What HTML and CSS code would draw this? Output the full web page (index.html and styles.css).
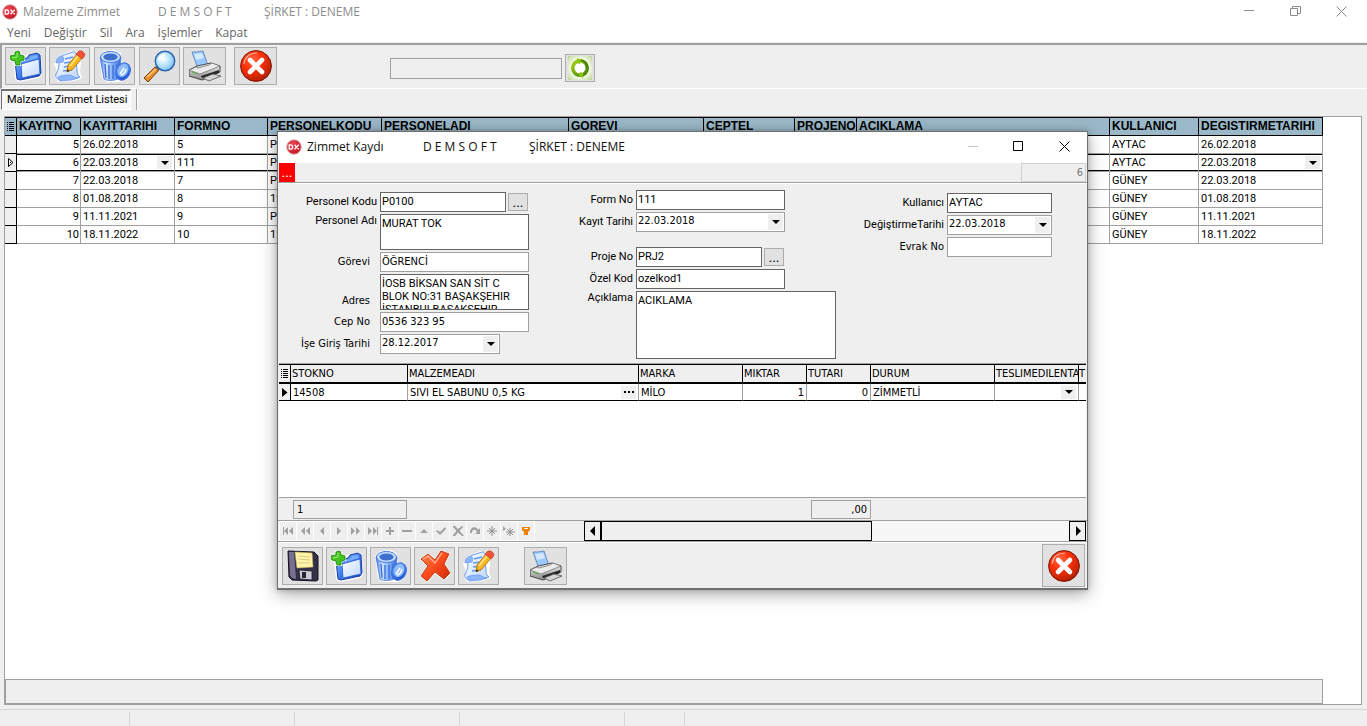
FILE: index.html
```html
<!DOCTYPE html>
<html lang="tr">
<head>
<meta charset="utf-8">
<title>Malzeme Zimmet</title>
<link rel="stylesheet" href="styles.css">
</head>
<body>
<svg class="sprite" aria-hidden="true">
  <defs>
    <linearGradient id="blue" x1="0" y1="0" x2="1" y2="1"><stop offset="0" stop-color="#8fc2ff"/><stop offset=".5" stop-color="#3d7df0"/><stop offset="1" stop-color="#1743b8"/></linearGradient>
    <linearGradient id="paper" x1="0" y1="0" x2="1" y2="1"><stop offset="0" stop-color="#ffffff"/><stop offset="1" stop-color="#bcd8ff"/></linearGradient>
    <linearGradient id="can" x1="0" y1="0" x2="1" y2="0"><stop offset="0" stop-color="#4a83ea"/><stop offset=".3" stop-color="#cfe4ff"/><stop offset=".6" stop-color="#7fb0f8"/><stop offset="1" stop-color="#3a6ad8"/></linearGradient>
    <radialGradient id="red" cx=".38" cy=".3" r=".8"><stop offset="0" stop-color="#ff6a48"/><stop offset=".4" stop-color="#fb3208"/><stop offset="1" stop-color="#a61c04"/></radialGradient>
    <linearGradient id="cross" x1="0" y1="0" x2="1" y2="1"><stop offset="0" stop-color="#ff8a5c"/><stop offset=".5" stop-color="#fb4a1c"/><stop offset="1" stop-color="#c52a04"/></linearGradient>
    <radialGradient id="lens" cx=".4" cy=".4" r=".7"><stop offset="0" stop-color="#ffffff"/><stop offset=".6" stop-color="#a8dcfb"/><stop offset="1" stop-color="#62aef0"/></radialGradient>
    <linearGradient id="metal" x1="0" y1="0" x2="0" y2="1"><stop offset="0" stop-color="#f4f4f4"/><stop offset="1" stop-color="#8c8c8c"/></linearGradient>
    <linearGradient id="green" x1="0" y1="0" x2="1" y2="1"><stop offset="0" stop-color="#a6d514"/><stop offset="1" stop-color="#3e7d06"/></linearGradient>
    <radialGradient id="leaf" cx=".5" cy=".5" r=".75"><stop offset=".45" stop-color="#fdfffb"/><stop offset="1" stop-color="#b4cf86"/></radialGradient>
    <radialGradient id="dxfill" cx=".4" cy=".3" r=".8"><stop offset="0" stop-color="#ea4652"/><stop offset="1" stop-color="#c5101f"/></radialGradient>
  </defs>
  <symbol id="i-dx" viewBox="0 0 16 16">
    <circle cx="8" cy="8" r="7.300" fill="url(#dxfill)" stroke="#dcb4b6" stroke-width="1"/>
    <path d="M3.200 5.800v4.400h1.200c3 0 3-4.400 0-4.400zM8.500 5.800l4.300 4.400M12.800 5.800l-4.300 4.400" fill="none" stroke="#fff" stroke-width="1.300"/>
  </symbol>
  <symbol id="i-new" viewBox="0 0 32 32">
    <path d="M3 10L16 5 28 2l3 3 1 19-3 4-20 4-4-3z" fill="#fff"/>
    <path d="M5 11l12-3 2-3 8-2 3 2 1 18-2 3-19 4-3-1z" fill="url(#blue)" stroke="#1a3ea0" stroke-width="1"/>
    <path d="M11 14l18-5 1 15-18 4z" fill="url(#paper)" stroke="#2457d0" stroke-width=".8"/>
    <path d="M14 10l5-1 2-3 6-1 1 3-14 4z" fill="#78aef8"/>
    <path d="M5 2l4-1 1 4 4 1v4l-4 1v4H6l-1-4-4-1-1-4 5-1z" fill="#46c422" stroke="#fff" stroke-width="2"/>
    <path d="M5 2l4-1 1 4 4 1v4l-4 1v4H6l-1-4-4-1-1-4 5-1z" fill="#46c422" stroke="#1c8a0c" stroke-width=".9"/>
    <path d="M7 3v4L2 8" fill="none" stroke="#a3ef78" stroke-width="1"/>
  </symbol>
  <symbol id="i-edit" viewBox="0 0 32 32">
    <path d="M0 14L5 6 17 1l8 2 2 10-1 9 2 6-8 3-15 1-4-4 2-7z" fill="#fff"/>
    <path d="M5 12c1-5 2-6 5-7l9-3c4 0 3 3 3 6l1 12c0 4 1 6 3 7l-7 2-12 1c-4 0-6-3-5-6 2-3 3-6 3-12z" fill="url(#paper)" stroke="#6b9bf2" stroke-width="1"/>
    <path d="M2 13c0-4 3-7 6-7 2 1 2 3 1 6zM4 27c4-2 8-2 13-2 2 1 4 3 7 3l-6 2-12 1z" fill="#8db6fa" stroke="#5a8ceb" stroke-width=".6"/>
    <path d="M11 9l8-2M10 13l8-1M10 17l6-1M9 21l9-1" stroke="#6297ef" stroke-width="1.500"/>
    <path d="M23 4l5 4-9 11-6 3 1-7z" fill="#f8b820" stroke="#b96c08" stroke-width=".9"/>
    <path d="M24 6L16 16" stroke="#ffe680" stroke-width="1.700"/>
    <path d="M22 4l3-3h3l3 3-1 3-2 2z" fill="#f0523a" stroke="#c43a24" stroke-width=".7"/>
    <path d="M13 22l.6-3 2 2z" fill="#402507"/>
  </symbol>
  <symbol id="i-trash" viewBox="0 0 32 32">
    <path d="M0 6L5 1 15 0l7 3 1 9 6 1 3 8-3 8-7 3H8l-5-4z" fill="#fff"/>
    <path d="M1 7h21l-2 21c-3 3-12 3-15 1z" fill="url(#can)" stroke="#4a7ae0" stroke-width=".9"/>
    <path d="M6 14l1 14M10 15v14M14 15v14M18 14v14" stroke="#4171d8" stroke-width="1.400"/>
    <ellipse cx="11.500" cy="7" rx="10" ry="5.500" fill="#c8e1ff" stroke="#4576dd"/>
    <ellipse cx="11.500" cy="7" rx="7.200" ry="3.500" fill="#3f6fce"/>
    <ellipse cx="24" cy="21.500" rx="7" ry="9" fill="url(#blue)" stroke="#3c6cd8" transform="rotate(25 24 21.500)"/>
    <ellipse cx="24" cy="20.500" rx="5" ry="6.800" fill="#8fbdfb" transform="rotate(25 24 20.500)"/>
    <path d="M21 24l4-6M22 25q4-1 5-6" fill="none" stroke="#fff" stroke-width="1.400"/>
  </symbol>
  <symbol id="i-find" viewBox="0 0 32 32">
    <path d="M0 28L11 17l4 3L4 32z" fill="#e98b26" stroke="#74400b" stroke-width="1"/>
    <path d="M3 27l9-8" stroke="#ffc780" stroke-width="1.600"/>
    <path d="M11 17l3-2 3 3-2 2z" fill="#585858"/>
    <circle cx="21" cy="11" r="9.700" fill="url(#lens)" stroke="#2e67ac" stroke-width="1.500"/>
    <path d="M15 10q1-5 6-5" fill="none" stroke="#fff" stroke-width="2"/>
  </symbol>
  <symbol id="i-print" viewBox="0 0 32 32">
    <path d="M3 2l5 0 6-1 5 15-10 3z" fill="#9acaff" stroke="#5c84ba" stroke-width=".9"/>
    <path d="M5 4l8-1 2 5-8 2z" fill="#d4e9ff"/>
    <path d="M0 20l8-4 14-3 9 3v6L13 30 0 26z" fill="url(#metal)" stroke="#484848" stroke-width="1"/>
    <path d="M0 20l11 4 20-8-8-3-3 2-11 3-2-1z" fill="#ececec" stroke="#686868" stroke-width=".7"/>
    <path d="M12 26l18-6v3l-17 5z" fill="#282828"/>
    <path d="M14 28l10-4 8 2-12 5z" fill="#d4d4d4" stroke="#525252" stroke-width=".8"/>
    <path d="M3 22l6 2" stroke="#4fb33c" stroke-width="1"/>
  </symbol>
  <symbol id="i-close" viewBox="0 0 32 32">
    <circle cx="16" cy="16" r="15.400" fill="url(#red)" stroke="#7c1404" stroke-width="1"/>
    <path d="M4 14C5 6 11 3 17 3" fill="none" stroke="#ffb7a2" stroke-width="1.200"/>
    <path d="M10 10l12 12M22 10L10 22" stroke="#fff" stroke-width="4.600" stroke-linecap="round"/>
  </symbol>
  <symbol id="i-cross" viewBox="0 0 32 32">
    <path d="M2 9l7-5 7 6 6-9 8 3-5 10 6 9-6 6-9-7-8 9-6-5 7-10z" fill="#fff" stroke="#fff" stroke-width="2"/>
    <path d="M2 9l7-5 7 6 6-9 8 3-5 10 6 9-6 6-9-7-8 9-6-5 7-10z" fill="url(#cross)" stroke="#c23a14" stroke-width="1"/>
    <path d="M4 9l5-3 7 7 7-10" fill="none" stroke="#ffb594" stroke-width="1.300"/>
  </symbol>
  <symbol id="i-save" viewBox="0 0 32 32">
    <path d="M1 1l26 1 4 4v24l-2 1-24-1-3-3z" fill="#343048" stroke="#14121f" stroke-width="1"/>
    <path d="M2 2h5l2 27-4-1-2-3z" fill="#77708f"/>
    <path d="M8 2l17 1 1 14-16 1z" fill="#fff4a8" stroke="#c8b764" stroke-width=".6"/>
    <path d="M11 6l12 1M11 9l12 1M11 13h12" stroke="#dccb86" stroke-width="1"/>
    <path d="M12 20l13 1v9l-12-1z" fill="#c9cad4" stroke="#1e1c2a" stroke-width=".8"/>
    <path d="M15 22h4v6h-4z" fill="#272436"/>
  </symbol>
  <symbol id="i-refresh" viewBox="0 0 24 24">
    <rect width="24" height="24" fill="url(#leaf)"/>
    <circle cx="12" cy="12" r="7.300" fill="none" stroke="url(#green)" stroke-width="3.600"/>
    <path d="M9 2l4 2-1 4-3-1zM15 22l-4-2 1-4 3 1z" fill="#8cc40c"/>
    <path d="M13 4c4 1 6 4 6 8" fill="none" stroke="#3e7d06" stroke-width="1.500"/>
  </symbol>
  <symbol id="i-list" viewBox="0 0 7 9">
    <path d="M0 .5h1M2 .5h5M0 2.500h1M2 2.500h5M0 4.500h1M2 4.500h5M0 6.500h1M2 6.500h5M0 8.500h1M2 8.500h5" stroke="#000"/>
  </symbol>
</svg>

<main class="app">
  <header class="titlebar">
    <svg class="logo"><use href="#i-dx"/></svg>
    <h1 class="caption"><span>Malzeme Zimmet</span><span>D E M S O F T</span><span>ŞİRKET : DENEME</span></h1>
    <div class="winctl">
      <button aria-label="Simge durumu"><svg viewBox="0 0 11 11"><path d="M0 4.500h10"/></svg></button>
      <button aria-label="Önceki boyut"><svg viewBox="0 0 11 11"><path d="M.5 2.500h7v7h-7zM2.500 2.500v-2h8v7h-3"/></svg></button>
      <button aria-label="Kapat"><svg viewBox="0 0 11 11"><path d="M.5.5l10 10M10.500.5l-10 10"/></svg></button>
    </div>
  </header>
  <nav class="menu">
    <button>Yeni</button><button>Değiştir</button><button>Sil</button><button>Ara</button><button>İşlemler</button><button>Kapat</button>
  </nav>
  <div class="toolbar">
    <div class="tools">
      <button class="tool" aria-label="Yeni"><svg><use href="#i-new"/></svg></button>
      <button class="tool" aria-label="Değiştir"><svg><use href="#i-edit"/></svg></button>
      <button class="tool" aria-label="Sil"><svg><use href="#i-trash"/></svg></button>
      <button class="tool" aria-label="Ara"><svg><use href="#i-find"/></svg></button>
      <button class="tool tool-wide" aria-label="Yazdır"><svg><use href="#i-print"/></svg></button>
      <button class="tool tool-wide" aria-label="Kapat"><svg><use href="#i-close"/></svg></button>
    </div>
    <input class="quick" aria-label="Hızlı arama">
    <button class="tool tool-refresh" aria-label="Yenile"><svg><use href="#i-refresh"/></svg></button>
  </div>
  <div class="tabs"><button class="tab">Malzeme Zimmet Listesi</button></div>

  <section class="list">
    <table class="grid records">
      <colgroup><col class="w-ind"><col class="w-no"><col class="w-date"><col class="w-form"><col class="w-code"><col class="w-name"><col class="w-job"><col class="w-tel"><col class="w-proj"><col><col class="w-user"><col class="w-mod"></colgroup>
      <thead><tr><th><svg class="listicon"><use href="#i-list"/></svg></th><th>KAYITNO</th><th>KAYITTARIHI</th><th>FORMNO</th><th>PERSONELKODU</th><th>PERSONELADI</th><th>GOREVI</th><th>CEPTEL</th><th>PROJENO</th><th>ACIKLAMA</th><th>KULLANICI</th><th>DEGISTIRMETARIHI</th></tr></thead>
      <tbody>
        <tr><td></td><td class="num">5</td><td>26.02.2018</td><td>5</td><td>P</td><td></td><td></td><td></td><td></td><td></td><td>AYTAC</td><td>26.02.2018</td></tr>
        <tr class="current"><td><svg class="pointer" viewBox="0 0 6 9"><path d="M.5.5v8l4.500-4z" fill="none" stroke="#000"/><path d="M2 4.500h1" stroke="#000"/></svg></td><td class="num">6</td><td><div class="pick">22.03.2018<button class="drop" aria-label="Tarih seç"></button></div></td><td>111</td><td>P</td><td></td><td></td><td></td><td></td><td></td><td>AYTAC</td><td><div class="pick">22.03.2018<button class="drop" aria-label="Tarih seç"></button></div></td></tr>
        <tr><td></td><td class="num">7</td><td>22.03.2018</td><td>7</td><td>P</td><td></td><td></td><td></td><td></td><td></td><td>GÜNEY</td><td>22.03.2018</td></tr>
        <tr><td></td><td class="num">8</td><td>01.08.2018</td><td>8</td><td>12</td><td></td><td></td><td></td><td></td><td></td><td>GÜNEY</td><td>01.08.2018</td></tr>
        <tr><td></td><td class="num">9</td><td>11.11.2021</td><td>9</td><td>P</td><td></td><td></td><td></td><td></td><td></td><td>GÜNEY</td><td>11.11.2021</td></tr>
        <tr><td></td><td class="num">10</td><td>18.11.2022</td><td>10</td><td>12</td><td></td><td></td><td></td><td></td><td></td><td>GÜNEY</td><td>18.11.2022</td></tr>
      </tbody>
    </table>
    <div class="listfoot"></div>
  </section>
  <footer class="status"><span class="s-a"></span><span class="s-b"></span><span class="s-b"></span><span class="s-b"></span><span class="s-c"></span></footer>
</main>

<section class="dialog" role="dialog" aria-labelledby="dlg">
  <header class="titlebar dlgbar">
    <svg class="logo"><use href="#i-dx"/></svg>
    <h2 class="caption" id="dlg"><span>Zimmet Kaydı</span><span>D E M S O F T</span><span>ŞİRKET : DENEME</span></h2>
    <div class="winctl">
      <button disabled aria-label="Simge durumu"><svg viewBox="0 0 11 11"><path d="M1 5.500h10"/></svg></button>
      <button aria-label="Ekranı kapla"><svg viewBox="0 0 11 11"><path d="M.5.5h9v9h-9z"/></svg></button>
      <button aria-label="Kapat"><svg viewBox="0 0 11 11"><path d="M.5.5l10 10M10.500.5l-10 10"/></svg></button>
    </div>
  </header>
  <div class="strip"><button class="alert">...</button><input class="recno" value="6" disabled aria-label="Kayıt no"></div>

  <form class="form">
    <div class="col col-a">
      <div class="row"><label for="kod">Personel Kodu</label><input id="kod" class="f dark f-lookup" value="P0100"><button type="button" class="dots">...</button></div>
      <div class="row top"><label for="adi">Personel Adı</label><textarea id="adi" class="f dark f-full">MURAT TOK</textarea></div>
      <div class="row tah"><label for="gor">Görevi</label><input id="gor" class="f f-full" value="ÖĞRENCİ"></div>
      <div class="row tah end"><label for="adr">Adres</label><textarea id="adr" class="f dark f-full">İOSB BİKSAN SAN SİT C BLOK NO:31 BAŞAKŞEHIR İSTANBULBAŞAKŞEHIR</textarea></div>
      <div class="row tah"><label for="cep">Cep No</label><input id="cep" class="f f-full" value="0536 323 95"></div>
      <div class="row tah"><label for="ise">İşe Giriş Tarihi</label><span class="combo f-date"><select id="ise" class="f"><option>28.12.2017</option></select></span></div>
    </div>
    <div class="col col-b">
      <div class="row"><label for="form">Form No</label><input id="form" class="f dark f-full" value="111"></div>
      <div class="row"><label for="kay">Kayıt Tarihi</label><span class="combo f-full"><select id="kay" class="f"><option>22.03.2018</option></select></span></div>
      <div class="row spaced"><label for="prj">Proje No</label><input id="prj" class="f dark f-lookup" value="PRJ2"><button type="button" class="dots">...</button></div>
      <div class="row"><label for="ozel">Özel Kod</label><input id="ozel" class="f dark f-full" value="ozelkod1"></div>
      <div class="row top"><label for="acik">Açıklama</label><textarea id="acik" class="f dark f-note">ACIKLAMA</textarea></div>
    </div>
    <div class="col col-c">
      <div class="row"><label for="kul">Kullanıcı</label><input id="kul" class="f dark f-short" value="AYTAC"></div>
      <div class="row"><label for="deg">DeğiştirmeTarihi</label><span class="combo f-short"><select id="deg" class="f"><option>22.03.2018</option></select></span></div>
      <div class="row"><label for="evr" class="tahlabel">Evrak No</label><input id="evr" class="f f-short"></div>
    </div>
  </form>

  <div class="items">
    <table class="grid lines">
      <colgroup><col class="w-ind"><col class="w-stok"><col><col class="w-brand"><col class="w-qty"><col class="w-qty"><col class="w-state"><col class="w-deliv"><col class="w-last"></colgroup>
      <thead><tr><th><svg class="listicon"><use href="#i-list"/></svg></th><th>STOKNO</th><th>MALZEMEADI</th><th>MARKA</th><th>MIKTAR</th><th>TUTARI</th><th>DURUM</th><th>TESLIMEDILENTA</th><th>T</th></tr></thead>
      <tbody><tr class="current"><td><svg class="pointer" viewBox="0 0 6 9"><path d="M0 0v9l5.500-4.500z"/></svg></td><td>14508</td><td><div class="pick">SIVI EL SABUNU 0,5 KG<button class="more" aria-label="Malzeme seç"><svg viewBox="0 0 10 2"><path d="M0 0h2v2H0zM4 0h2v2H4zM8 0h2v2H8z"/></svg></button></div></td><td>MİLO</td><td class="num">1</td><td class="num">0</td><td>ZİMMETLİ</td><td><div class="pick"><button class="drop" aria-label="Tarih seç"></button></div></td><td></td></tr></tbody>
    </table>
  </div>
  <div class="totals"><output class="count">1</output><output class="sum">,00</output></div>
  <div class="navrow">
    <div class="nav">
      <button aria-label="İlk"><svg viewBox="0 0 12 10"><path d="M1 1h1v8H1zM6 1v8L2 5zM11 1v8L7 5z"/></svg></button>
      <button aria-label="Önceki sayfa"><svg viewBox="0 0 12 10"><path d="M6 1v8L2 5zM11 1v8L7 5z"/></svg></button>
      <button aria-label="Önceki"><svg viewBox="0 0 12 10"><path d="M8 1v8L4 5z"/></svg></button>
      <button aria-label="Sonraki"><svg viewBox="0 0 12 10"><path d="M4 1v8l4-4z"/></svg></button>
      <button aria-label="Sonraki sayfa"><svg viewBox="0 0 12 10"><path d="M1 1v8l4-4zM6 1v8l4-4z"/></svg></button>
      <button aria-label="Son"><svg viewBox="0 0 12 10"><path d="M1 1v8l4-4zM6 1v8l4-4zM10 1h1v8h-1z"/></svg></button>
      <button aria-label="Ekle"><svg viewBox="0 0 12 10"><path d="M5 1h2v3h3v2H7v3H5V6H2V4h3z"/></svg></button>
      <button aria-label="Çıkar"><svg viewBox="0 0 12 10"><path d="M1 4h10v2H1z"/></svg></button>
      <button aria-label="Düzenle"><svg viewBox="0 0 12 10"><path d="M2 7l4-4 4 4z"/></svg></button>
      <button aria-label="Onayla"><svg viewBox="0 0 12 10"><path d="M2 4l3 2 5-5 1 2-6 6-4-4z"/></svg></button>
      <button aria-label="Vazgeç"><svg viewBox="0 0 12 10"><path d="M1 0h2l3 3 4-3h1v1L7.500 5l4 4v1H10L6 6.500 3 10H1V9l3.500-4L1 1z"/></svg></button>
      <button aria-label="Yenile"><svg viewBox="0 0 12 10"><path d="M1 7c0-7 7-7 8-3l2-2v6H6l2-2C7 3 3 3 3 7z"/></svg></button>
      <button aria-label="Yer imi"><svg viewBox="0 0 12 10"><path class="line" d="M6 0v10M1 5h10M3 2l6 6M9 2L3 8"/></svg></button>
      <button aria-label="Yer imine git"><svg viewBox="0 0 12 10"><path d="M0 0v5l3-2z"/><path class="line" d="M7 2v8M3 6h9M4 3l6 6M10 3L4 9"/></svg></button>
      <button aria-label="Süz" class="filter"><svg viewBox="0 0 12 10"><path d="M2 1h8v3L8 6v3H4V6L2 4zM4 3h4V2H4z" fill-rule="evenodd"/></svg></button>
    </div>
    <div class="scroll">
      <button class="arrow" aria-label="Sola"><svg viewBox="0 0 6 10"><path d="M5 0v10L0 5z"/></svg></button>
      <div class="track"><div class="thumb"></div></div>
      <button class="arrow" aria-label="Sağa"><svg viewBox="0 0 6 10"><path d="M1 0v10l5-5z"/></svg></button>
    </div>
  </div>
  <div class="actions">
    <button class="tool" aria-label="Kaydet"><svg><use href="#i-save"/></svg></button>
    <button class="tool" aria-label="Yeni"><svg><use href="#i-new"/></svg></button>
    <button class="tool" aria-label="Sil"><svg><use href="#i-trash"/></svg></button>
    <button class="tool" aria-label="İptal"><svg><use href="#i-cross"/></svg></button>
    <button class="tool" aria-label="Düzenle"><svg><use href="#i-edit"/></svg></button>
    <button class="tool tool-wide tool-print" aria-label="Yazdır"><svg><use href="#i-print"/></svg></button>
    <button class="tool tool-wide tool-exit" aria-label="Kapat"><svg><use href="#i-close"/></svg></button>
  </div>
</section>
</body>
</html>
```
FILE: styles.css
```css
:root {
  --face: #efefef;
  --line: #a0a0a0;
  --ms: Roboto, "Liberation Sans", sans-serif;
  --bold: "Liberation Sans", Arial, sans-serif;
  --tahoma: "DejaVu Sans Condensed", "Noto Sans", sans-serif;
  --segoe: "Open Sans", "Noto Sans", sans-serif;
}
* { box-sizing: border-box; }
body { margin: 0; background: var(--face); font: 11px/14px var(--ms); color: #000; overflow: hidden; }
button, input, select, textarea { font: inherit; color: inherit; margin: 0; border-radius: 0; }
button { padding: 0; }
.sprite { position: absolute; width: 0; height: 0; }

.app { display: flex; flex-direction: column; height: 100vh; }

/* Title bars */
.titlebar { display: flex; align-items: center; height: 23px; padding-left: 2px; background: #fff; color: #8c8c8c; font: 12px/16px var(--segoe); }
.logo { width: 16px; height: 16px; flex: none; }
.caption { display: grid; grid-template-columns: 135px 106px auto; margin: 0 0 0 5px; font: inherit; white-space: nowrap; }
.winctl { display: flex; margin-left: auto; margin-right: 3px; }
.winctl button { width: 46px; height: 20px; border: 0; background: none; display: grid; place-items: center; }
.winctl svg { width: 11px; height: 11px; fill: none; stroke: #8c8c8c; }

.menu { display: flex; gap: 13px; height: 19px; padding-left: 7px; background: #fff; }
.menu button { border: 0; background: none; color: #666; font: 12px/18px var(--segoe); }

/* Toolbar */
.toolbar { display: flex; align-items: center; height: 46px; border-top: 2px solid var(--line); border-left: 2px solid var(--line); border-bottom: 1px solid #fff; padding: 0 0 1px 3px; margin-top: 1px; }
.tools { display: grid; grid-template-columns: 44px 45px 45px 44px 51px 156px; }
.tool { width: 41px; height: 38px; border: 1px solid #adadad; background: #e1e1e1; display: grid; place-items: center; }
.tool svg { width: 32px; height: 32px; }
.tool-wide { width: 43px; }
.quick { width: 172px; height: 21px; border: 1px solid var(--line); background: var(--face); margin-top: 4px; }
.tool-refresh { width: 30px; height: 28px; margin: 4px 0 0 3px; }
.tool-refresh svg { width: 24px; height: 24px; }

.tabs { display: flex; height: 27px; padding-left: 1px; }
.tab { height: 21px; padding: 0 3px 0 5px; border: 1px solid #fff; border-top: 2px solid #707070; border-left: 1px solid #707070; background: #f7f7f7; line-height: 18px; }
.tabs::after { content: ""; height: 21px; margin-left: 5px; border-left: 1px solid var(--line); border-right: 1px solid #fff; }

/* Record list */
.list { flex: 1; display: flex; flex-direction: column; justify-content: space-between; margin: 0 5px 4px 4px; border: 1px solid var(--line); background: #fff; }
.grid { border-collapse: separate; border-spacing: 0; table-layout: fixed; }
.grid th, .grid td { height: 18px; padding: 0 2px; overflow: hidden; white-space: nowrap; text-align: left; line-height: 15px; }
.grid th { border-right: 1px solid #000; border-bottom: 1px solid #000; }
.grid td { border-right: 1px solid var(--line); border-bottom: 1px solid var(--line); }
.grid th:first-child, .grid td:first-child { padding: 0; border-color: #000; background: var(--face); text-align: center; }
.grid .num { text-align: right; padding-right: 1px; }
.grid .current td:not(:first-child) { box-shadow: inset 0 1px #000, inset 0 -1px #000; }
.records { width: calc(100% - 38px); border-top: 1px solid #000; }
.records th, .records th:first-child { background: #9bb8c8; font: bold 12px/15px var(--bold); }
.listicon { width: 7px; height: 9px; display: block; margin: auto; }
.pointer { width: 6px; height: 9px; display: block; margin: auto; }
.pick { display: flex; justify-content: space-between; align-items: center; height: 15px; }
.drop, .more { width: 15px; height: 13px; margin-left: auto; border: 0; background: var(--face); display: grid; place-items: center; }
.drop::after, .combo::after { content: ""; border: 4px solid transparent; border-top-color: #000; border-bottom: 0; }
.more svg { width: 10px; height: 2px; }
.w-ind { width: 12px; } .w-no { width: 64px; } .w-date { width: 94px; } .w-form { width: 93px; }
.w-code { width: 114px; } .w-name { width: 187px; } .w-job { width: 135px; } .w-tel { width: 91px; }
.w-proj { width: 62px; } .w-user { width: 89px; } .w-mod { width: 124px; }
.listfoot { height: 25px; width: calc(100% - 38px); border: 1px solid var(--line); background: var(--face); }

.status { display: flex; height: 17px; border-top: 1px solid #d7d7d7; padding-top: 2px; }
.status span { border-right: 1px solid #d7d7d7; }
.s-a { width: 130px; } .s-b { width: 165px; } .s-c { width: 60px; }

/* Floating record window */
.dialog { position: absolute; left: 277px; top: 131px; width: 811px; display: flex; flex-direction: column; background: var(--face); border: 1px solid #6f6f6f; border-bottom-width: 2px; box-shadow: 0 4px 16px rgba(0, 0, 0, .35), 0 0 5px rgba(0, 0, 0, .2); }
.dlgbar { height: 31px; padding: 0 0 2px 8px; color: #111; }
.dlgbar .caption { grid-template-columns: 116px 106px auto; }
.dlgbar .winctl { margin-right: 0; }
.dlgbar .winctl svg { stroke: #000; }
.dlgbar .winctl button:disabled svg { stroke: #c4c4c4; }
.strip { display: flex; justify-content: space-between; height: 20px; padding: 0 1px; border-bottom: 1px solid var(--line); }
.alert { width: 16px; height: 19px; border: 0; background: #f00; color: #fff; font-size: 14px; line-height: 19px; }
.recno { width: 65px; height: 19px; border: 1px solid #d0d0d0; background: var(--face); color: #777; font: 11px var(--tahoma); text-align: right; padding: 0 2px; }

.form { display: flex; height: 180px; border-top: 1px solid #fff; }
.col { display: flex; flex-direction: column; gap: 2px; }
.row { display: flex; align-items: center; }
.row label { text-align: right; white-space: nowrap; padding-right: 3px; flex: none; }
.col-a { padding-top: 8px; width: 251px; }
.col-b { padding-top: 6px; width: 307px; }
.col-c { padding-top: 9px; }
.col-a label { width: 102px; }
.col-b label { width: 107px; }
.col-c label { width: 111px; }
.row.top { align-items: flex-start; }
.row.end { align-items: flex-end; }
.row.end label { padding-bottom: 2px; }
.row.spaced { margin-top: 13px; }
.tah label, .tahlabel { font-family: var(--tahoma); }
.tah label { padding-right: 10px; }
.f { display: block; height: 20px; border: 1px solid var(--line); background: #fff; padding: 0 1px 2px; outline: 0; }
.f.dark { border-color: #646464; }
textarea.f { height: 36px; padding: 2px 1px 0; line-height: 13px; resize: none; overflow: hidden; }
input.f:not(.dark), select.f { font-family: var(--tahoma); }
textarea.f-note { width: 200px; height: 68px; }
.f-full { width: 149px; }
.f-lookup { width: 126px; }
.f-date { width: 120px; }
.f-short { width: 105px; }
.combo { position: relative; }
.combo select { width: 100%; appearance: none; }
.combo::before { content: ""; position: absolute; right: 2px; top: 2px; width: 15px; height: 16px; background: var(--face); pointer-events: none; }
.combo::after { position: absolute; right: 5px; top: 8px; pointer-events: none; }
.dots { width: 20px; height: 18px; margin-left: 2px; border: 1px solid #adadad; background: #e1e1e1; font-size: 14px; line-height: 14px; }

/* Item lines */
.items { height: 135px; margin: 0 1px; border-top: 1px solid var(--line); border-bottom: 1px solid var(--line); background: #fff; }
.lines { width: 100%; border-top: 1px solid #000; font-family: var(--tahoma); }
.lines th { background: var(--face); font-weight: 400; border-bottom-width: 2px; height: 19px; padding: 0 1px; }
.lines td { border-bottom-color: #000; height: 17px; }
.lines th:last-child { padding: 0; border-right: 0; }
.lines td:last-child { border-right: 0; }
.lines .current td:not(:first-child) { box-shadow: none; }
.lines .num { padding-right: 2px; }
.w-stok { width: 117px; } .w-brand { width: 104px; } .w-qty { width: 64px; } .w-state { width: 124px; } .w-deliv { width: 84px; } .w-last { width: 7px; }
.totals { display: flex; align-items: center; height: 23px; padding-left: 15px; border-bottom: 1px solid var(--line); font-family: var(--tahoma); }
.totals output { height: 19px; border: 1px solid var(--line); padding: 2px 3px 0; }
.count { width: 114px; }
.sum { width: 60px; margin-left: 404px; text-align: right; }
.navrow { display: flex; height: 21px; padding-right: 1px; border-bottom: 1px solid var(--line); }
.nav { display: flex; gap: 1px; width: 306px; padding: 1px 2px; }
.nav button { width: 16px; height: 18px; border: 0; background: var(--face); box-shadow: 0 0 0 1px #fff; display: grid; place-items: center; }
.nav svg { width: 12px; height: 10px; fill: #a0a0a0; }
.nav .line { fill: none; stroke: #909090; }
.nav .filter svg { fill: #f08000; }
.scroll { flex: 1; display: flex; height: 20px; }
.arrow { width: 17px; border: 1px solid #000; background: var(--face); display: grid; place-items: center; }
.arrow svg { width: 6px; height: 10px; }
.track { flex: 1; background: #f7f7f7; }
.thumb { width: 58%; height: 100%; border: 1px solid #000; background: var(--face); }
.actions { display: flex; align-items: center; gap: 3px; height: 46px; padding: 0 2px 0 4px; border-top: 1px solid #fff; }
.tool-print { margin-left: 22px; }
.tool-exit { height: 43px; margin-left: auto; }
```
